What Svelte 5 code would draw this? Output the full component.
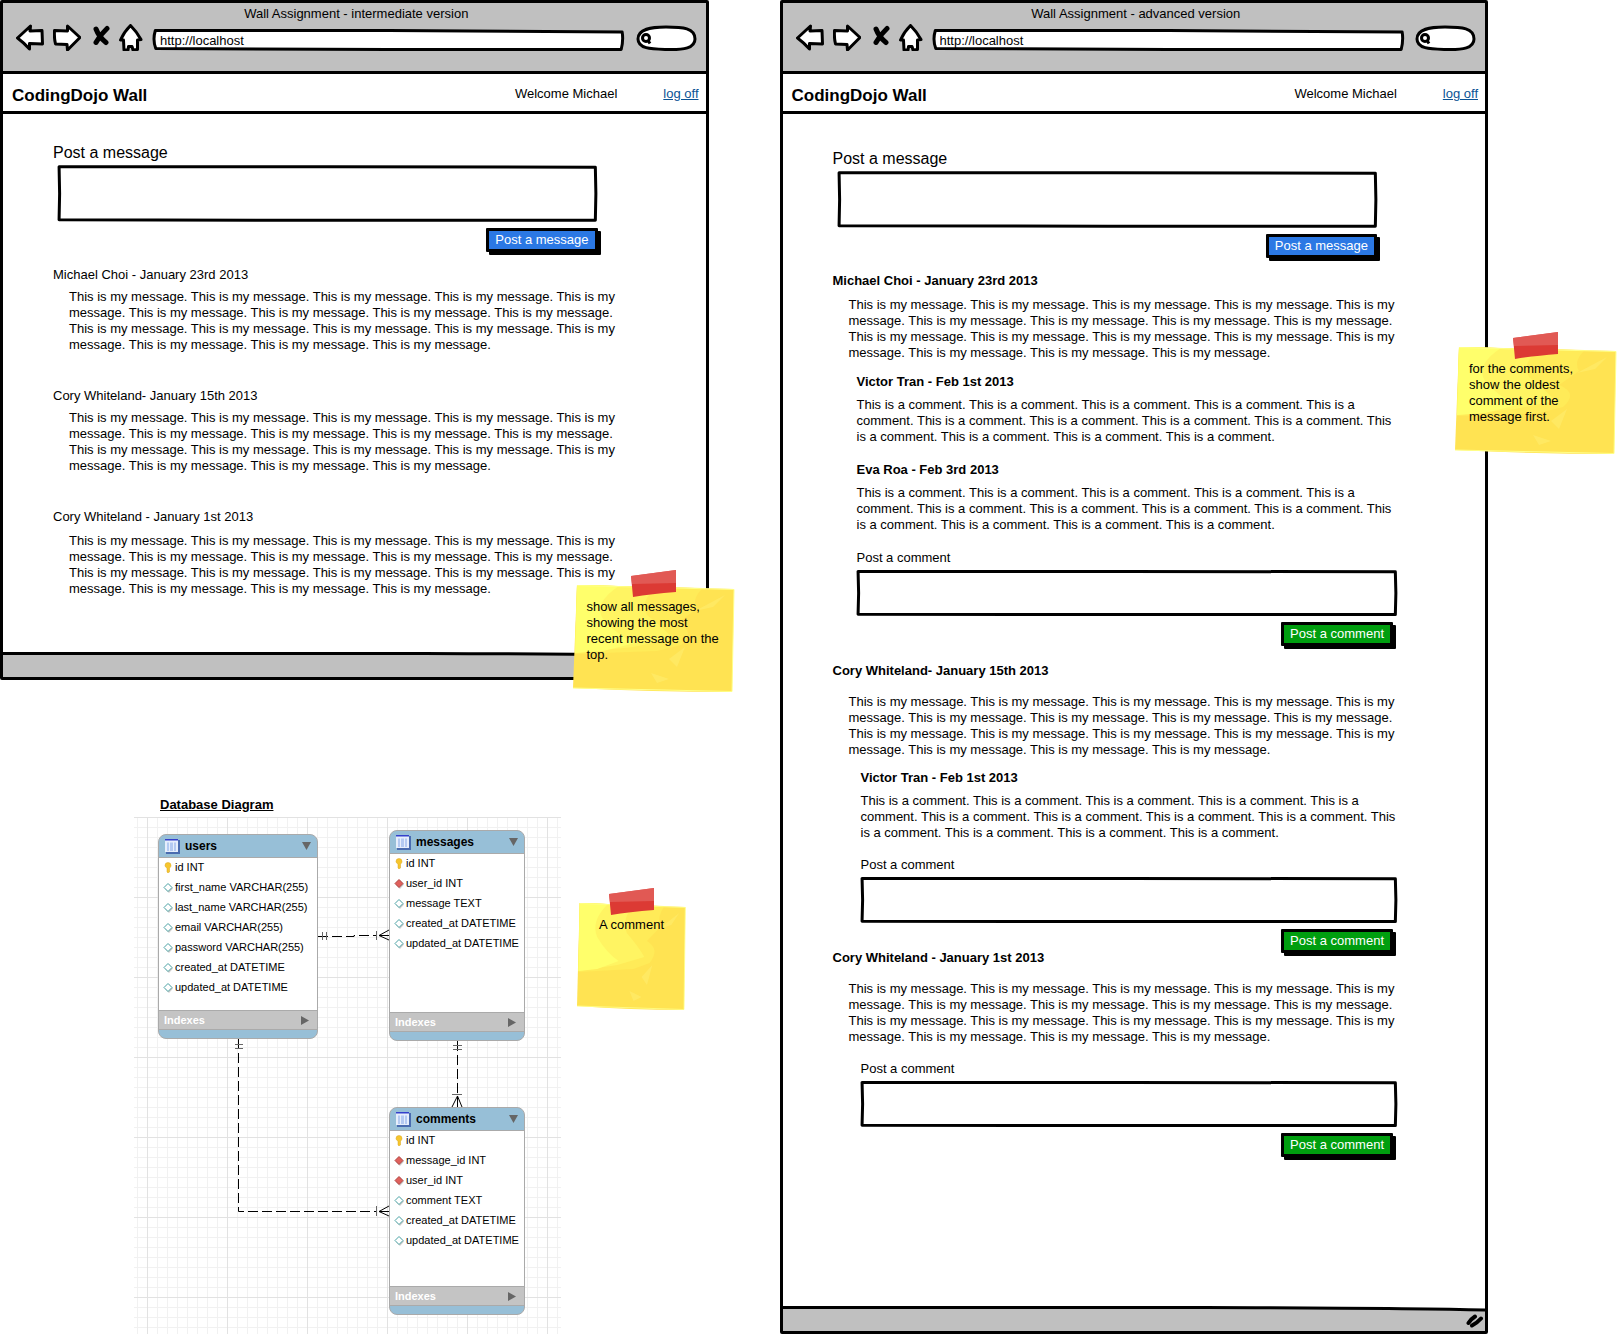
<script lang="ts">
  type Comment = { author: string; date: string };
  type Post = { author: string; sep: string; date: string; loose?: boolean; tight?: boolean; comments: Comment[] };

  const messageText = Array(17).fill('This is my message.').join(' ');
  const commentText = Array(13).fill('This is a comment.').join(' ');

  const intermediate: Post[] = [
    { author: 'Michael Choi', sep: ' - ', date: 'January 23rd 2013', comments: [] },
    { author: 'Cory Whiteland', sep: '- ', date: 'January 15th 2013', comments: [] },
    { author: 'Cory Whiteland', sep: ' - ', date: 'January 1st 2013', loose: true, comments: [] },
  ];

  const advanced: Post[] = [
    {
      author: 'Michael Choi', sep: ' - ', date: 'January 23rd 2013',
      comments: [{ author: 'Victor Tran', date: 'Feb 1st 2013' }, { author: 'Eva Roa', date: 'Feb 3rd 2013' }],
    },
    {
      author: 'Cory Whiteland', sep: '- ', date: 'January 15th 2013', loose: true,
      comments: [{ author: 'Victor Tran', date: 'Feb 1st 2013' }],
    },
    { author: 'Cory Whiteland', sep: ' - ', date: 'January 1st 2013', loose: true, tight: true, comments: [] },
  ];

  // position and size of each entity on the diagram canvas
  const entities = [
    {
      name: 'users', x: 24, y: 17, w: 160, h: 205,
      columns: [
        ['key', 'id INT'],
        ['col', 'first_name VARCHAR(255)'],
        ['col', 'last_name VARCHAR(255)'],
        ['col', 'email VARCHAR(255)'],
        ['col', 'password VARCHAR(255)'],
        ['col', 'created_at DATETIME'],
        ['col', 'updated_at DATETIME'],
      ],
    },
    {
      name: 'messages', x: 255, y: 13, w: 136, h: 211,
      columns: [
        ['key', 'id INT'],
        ['fk', 'user_id INT'],
        ['col', 'message TEXT'],
        ['col', 'created_at DATETIME'],
        ['col', 'updated_at DATETIME'],
      ],
    },
    {
      name: 'comments', x: 255, y: 290, w: 136, h: 208,
      columns: [
        ['key', 'id INT'],
        ['fk', 'message_id INT'],
        ['fk', 'user_id INT'],
        ['col', 'comment TEXT'],
        ['col', 'created_at DATETIME'],
        ['col', 'updated_at DATETIME'],
      ],
    },
  ];
</script>

{#snippet toolbar(title: string)}
  <header class="toolbar">
    <div class="window-title">{title}</div>
    <div class="nav">
      <button class="icon" aria-label="Back">
        <svg width="28" height="27" viewBox="0 0 28 27"><path d="M1.5 14 L14.5 2 L14 7 L26 6.5 L26.5 20 L13.5 19.5 L13.5 25 Q7 18 1.5 14Z" /></svg>
      </button>
      <button class="icon" aria-label="Forward">
        <svg width="28" height="27" viewBox="0 0 28 27"><path d="M1.5 6.5 L14.5 7 L14.5 2 Q21 8 27 13.5 L14.5 26 L14 20.5 L2.5 20 Q1 14 1.5 6.5Z" /></svg>
      </button>
      <button class="icon" aria-label="Stop">
        <svg width="20" height="27" viewBox="0 0 20 27"><path class="cross" d="M6 5 Q9 13 16 18.5 M17 4.5 Q10 11 6 18.5" /></svg>
      </button>
      <button class="icon" aria-label="Home">
        <svg width="24" height="27" viewBox="0 0 24 27"><path d="M11.5 1.5 Q5 8 1.5 16 L4.5 16 L5 26 L9 26 L9.5 22.5 L13 22.5 L14 26 L18.5 25.5 L18.5 16 L22 15.5 Q18 8 11.5 1.5Z" /></svg>
      </button>
      <div class="sketch address">
        <svg viewBox="0 0 100 22" preserveAspectRatio="none" aria-hidden="true"><path d="M.7 1.5 L50 1.5 L99.5 3 Q99.8 11 99.3 20.5 L50 20.5 L.8 19.5 Q.1 11 .7 1.5Z" /></svg>
        <input type="text" value="http://localhost" aria-label="Address" />
      </div>
      <div class="sketch search">
        <svg viewBox="0 0 60 26" aria-hidden="true">
          <path d="M29 2 C14 2 1 4 1 14 C1 24 15 24 30 24.5 C47 25 58 23 58 14 C58 3 46 2 29 2Z" />
          <circle cx="9" cy="13" r="3.5" /><path d="M11 15.5 L13 18.5" />
        </svg>
        <input type="search" aria-label="Search" />
      </div>
    </div>
  </header>
  <div class="app-bar">
    <h1>CodingDojo Wall</h1>
    <span class="welcome">Welcome Michael</span>
    <a href="#logoff">log off</a>
  </div>
{/snippet}

{#snippet form(id: string, kind: string)}
  <form class="post-form {kind}" on:submit|preventDefault>
    <label for={id}>Post a {kind}</label>
    <div class="sketch field">
      <svg viewBox="0 0 100 100" preserveAspectRatio="none" aria-hidden="true"><path d="M.2 3 L50 3 L99.6 4 L99.7 50 L99.6 97 L50 97 L.2 96 L.3 50Z" /></svg>
      <textarea {id}></textarea>
    </div>
    <button type="submit">Post a {kind}</button>
  </form>
{/snippet}

{#snippet wall(posts: Post[], prefix: string, threaded: boolean)}
  {#each posts as post, i}
    <article class="post" class:loose={post.loose} class:tight={post.tight}>
      <h2>{post.author}{post.sep}{post.date}</h2>
      <p class="message-text">{messageText}</p>
      {#if threaded}
        <div class="thread">
          {#each post.comments as comment}
            <div class="reply">
              <h3>{comment.author} - {comment.date}</h3>
              <p>{commentText}</p>
            </div>
          {/each}
          {@render form(`${prefix}-comment-${i}`, 'comment')}
        </div>
      {/if}
    </article>
  {/each}
{/snippet}

{#snippet statusBar(grip: boolean)}
  <footer class="status">
    <svg class="edge" viewBox="0 0 100 6" preserveAspectRatio="none" aria-hidden="true"><path class="gap" d="M0 0 H100 V4 Q90 2 60 1.5 H0Z" /><path d="M0 1.5 H60 Q90 2 100 4" /></svg>
    {#if grip}
      <svg class="grip" width="18" height="14" viewBox="0 0 18 14" aria-hidden="true"><path d="M2.5 9 Q5 5 9 2.5 M6 11.5 Q11 9 15 4.5" /></svg>
    {/if}
  </footer>
{/snippet}

{#snippet note(text: string)}
  <svg class="paper" viewBox="0 0 162 108" preserveAspectRatio="none" aria-hidden="true">
    <path fill="#ffe352" d="M4 0 L161 4 L159 107 Q80 107 0 103 Z" />
    <path fill="#ffeb58" d="M4 0 L130 3 Q118 14 124 24 L104 38 Q124 46 108 60 L84 66 L2 69 Z" />
    <path fill="#fff462" d="M4 0 L86 2 Q66 14 74 30 Q92 44 100 54 L60 62 L2 68 Z" />
    <path fill="#ffff6b" d="M4 0 L46 1 Q20 18 30 34 Q44 50 62 58 L30 66 L2 68Z" />
    <path fill="#ffec6e" opacity=".6" d="M96 74 L112 62 L104 82Z M122 26 L152 10 L140 22Z M78 88 L96 94 L84 98Z" />
    <path fill="none" stroke="#ffff8a" d="M4 .5 L161 4.5 L159 106.5 L0 103" />
  </svg>
  <svg class="tape" width="46" height="27" viewBox="0 0 46 27" aria-hidden="true">
    <path fill="#dc3a34" d="M0 6 L45 0 L45 22 Q20 24 2 27Z" />
    <path fill="#e2625c" opacity=".8" d="M0 6 L45 0 L45 13 L1 14Z" />
  </svg>
  <p>{text}</p>
{/snippet}

<div class="page">
  <div class="column">
    <section class="window">
      {@render toolbar('Wall Assignment - intermediate version')}
      <main class="content">
        {@render form('basic-message', 'message')}
        {@render wall(intermediate, 'basic', false)}
      </main>
      {@render statusBar(false)}
      <aside class="note on-bottom">{@render note('show all messages, showing the most recent message on the top.')}</aside>
    </section>

    <section class="database">
      <h2>Database Diagram</h2>
      <div class="diagram-row">
        <div class="canvas">
          <svg class="links" viewBox="0 0 427 517" aria-hidden="true">
            <g class="line">
              <path d="M184 119.5 H220 V118.5 H243" />
              <path d="M104.5 222 V394.5 H243" />
              <path d="M323.5 224 V277" />
            </g>
            <g class="tick">
              <path d="M188.5 115 V123 M192.5 115 V123 M242.5 114 V123" />
              <path d="M101 227.5 H109 M101 231.5 H109 M242.5 389 V399" />
              <path d="M319 228.5 H328 M319 232.5 H328 M318 277.5 H328" />
            </g>
            <g class="foot">
              <path d="M255 113 L245 118.5 L255 123 M245 118.5 H255" />
              <path d="M255 389 L245 394.5 L255 399 M245 394.5 H255" />
              <path d="M318 290 L323.5 279 L328 290 M323.5 279 V290" />
            </g>
          </svg>
          {#each entities as e}
            <div class="entity" style="left: {e.x}px; top: {e.y}px; width: {e.w}px; height: {e.h}px">
              <div class="entity-head">
                <svg width="15" height="15" viewBox="0 0 15 15" aria-hidden="true">
                  <path fill="#4a6cb0" d="M1 1 H15 V15 H1Z" /><path fill="#e6eefc" d="M0 0 H13 V13 H0Z" />
                  <path fill="#3340cc" d="M0 0 H13 V1.5 H0Z" /><path fill="#b4caf2" d="M2 3.5 H4 V12 H2Z M5 3.5 H8 V12 H5Z M9 3.5 H11 V12 H9Z" />
                </svg>
                <h3>{e.name}</h3>
                <button class="toggle" aria-label="Collapse {e.name}"><svg width="9" height="8" viewBox="0 0 9 8"><path d="M0 0 H9 L4.5 8Z" /></svg></button>
              </div>
              <ul>
                {#each e.columns as [kind, text]}
                  <li>
                    <svg width="10" height="11" viewBox="0 0 10 11" aria-hidden="true">
                      {#if kind === 'key'}
                        <path fill="#f6c62e" stroke="#d9a521" stroke-width=".5" d="M5 .5 Q8 .5 8 3.5 Q8 5 6.5 6 V10 L5 11 L4 10 V6 Q2 5 2 3.5 Q2 .5 5 .5Z" />
                      {:else}
                        <path fill="#ccc" d="M6 2 L10 6.5 L6 11 L2 7Z" />
                        <path class={kind} d="M5 1.5 L9 5.5 L5 9.5 L1 5.5Z" />
                      {/if}
                    </svg>
                    {text}
                  </li>
                {/each}
              </ul>
              <div class="indexes">
                <span>Indexes</span>
                <button class="toggle" aria-label="Show {e.name} indexes"><svg width="8" height="9" viewBox="0 0 8 9"><path d="M0 0 L8 4.5 L0 9Z" /></svg></button>
              </div>
            </div>
          {/each}
        </div>
        <aside class="note small">{@render note('A comment')}</aside>
      </div>
    </section>
  </div>

  <section class="window tall">
    {@render toolbar('Wall Assignment - advanced version')}
    <main class="content">
      {@render form('advanced-message', 'message')}
      {@render wall(advanced, 'advanced', true)}
    </main>
    {@render statusBar(true)}
    <aside class="note on-side">{@render note('for the comments, show the oldest comment of the message first.')}</aside>
  </section>
</div>

<style>
:global(body) { margin: 0; background: #fff }

.page {
  display: grid;
  grid-template-columns: 1fr 1fr;
  gap: 71px;
  padding: 0 129px 0 0;
  font: 13px/16px "Liberation Sans", Arial, sans-serif;
  color: #000;
}
.column { min-width: 0 }
h1, h2, h3, p, ul { margin: 0; padding: 0 }
h2, h3 { font-size: 13px; line-height: 16px }
button, input, textarea { font: inherit; color: inherit }

.window {
  position: relative;
  display: flex;
  flex-direction: column;
  box-sizing: border-box;
  min-width: 0;
  border: 3px solid #000;
  border-radius: 2px;
}
.toolbar {
  background: #c0c0c0;
  border-bottom: 3px solid #000;
  padding: 3px 9px 20px 13px;
}
.window-title { text-align: center }
.nav {
  display: flex;
  align-items: center;
  gap: 9px;
  padding-top: 2px;
}
.icon { display: flex; padding: 0; border: 0; background: none }
.icon path {
  fill: #fff;
  stroke: #000;
  stroke-width: 3;
  stroke-linejoin: round;
}
.icon .cross { fill: none; stroke-width: 5; stroke-linecap: round }

/* hand drawn outline sits behind the control in the same cell */
.sketch { display: grid; grid-template: 100% / 100% }
.sketch > * { grid-area: 1 / 1; width: 100%; height: 100%; min-width: 0; box-sizing: border-box }
.sketch svg { display: block; overflow: visible }
.sketch path, .sketch circle {
  fill: #fff;
  stroke: #000;
  stroke-width: 3;
  stroke-linejoin: round;
  vector-effect: non-scaling-stroke;
}
.sketch input, .sketch textarea {
  z-index: 1;
  border: 0;
  margin: 0;
  padding: 0 8px;
  background: none;
  resize: none;
  outline: none;
}
.nav .sketch { align-self: flex-end }
.address { flex: 1; height: 22px }
.search { width: 60px; height: 26px; margin-left: 3px }
.search input { padding-left: 18px; appearance: none }

.app-bar {
  display: flex;
  align-items: center;
  height: 34px;
  padding: 3px 7px 0 9px;
  border-bottom: 3px solid #000;
}
h1 { flex: 1; padding-top: 4px; font-size: 17px; line-height: 20px }
.welcome { margin-right: 46px }
.app-bar a { color: #0b5394 }

.content { padding: 29px 88px 55px 50px }
.tall .content { padding-top: 35px; flex: 1 }

.post-form { display: flex; flex-direction: column }
.post-form.message { margin: 0 20px 15px 0 }
.message label { margin-bottom: 2px; font-size: 16px; line-height: 20px }
.field { height: 46px }
.message .field { height: 57px; margin-left: 5px }
.comment label { line-height: 16px; margin-bottom: 4px }
.post-form button {
  align-self: flex-end;
  height: 24px;
  margin-top: 6px;
  padding: 0 6px;
  border: 3px solid #000;
  border-radius: 1px;
  color: #fff;
  line-height: 16px;
  box-shadow: 3px 3px 0 #000;
}
.message button { background: #2b78e4 }
.comment button { background: #009e0f; margin-right: 4px }

.post + .post { margin-top: 35px }
.post h2 { font-weight: normal }
.message-text { padding: 6px 0 0 16px }
.loose .message-text { padding-top: 8px }

.tall .post + .post { margin-top: 17px }
.tall .post + .tight { margin-top: -3px }
.tall .post h2 { font-weight: bold }
.tall .post .message-text { padding-top: 8px }
.tall .loose .message-text { padding-top: 15px }
.thread {
  display: flex;
  flex-direction: column;
  gap: 17px;
  padding: 13px 0 0 24px;
}
.loose .thread { gap: 16px; padding: 12px 0 0 28px }
.tight .thread { padding-top: 16px }
.reply h3 { margin-bottom: 7px }

.status {
  position: relative;
  display: flex;
  flex-direction: column;
  height: 25px;
  background: #c0c0c0;
}
.edge { display: block; width: 100%; height: 6px }
.edge path { fill: none; stroke: #000; stroke-width: 3; vector-effect: non-scaling-stroke }
.edge .gap { fill: #fff; stroke: none }
.grip { align-self: flex-end; margin: 2px 1px 0 0 }
.grip path { fill: none; stroke: #000; stroke-width: 4; stroke-linecap: round }

.note {
  position: relative;
  display: grid;
  box-sizing: border-box;
  width: 162px;
  height: 123px;
  padding-top: 15px;
}
.note > p { grid-area: 1 / 1; padding: 14px 12px 0 14px; z-index: 1 }
.paper { grid-area: 1 / 1; width: 100%; height: 100%; display: block }
.tape { position: absolute; top: 0; left: 50%; transform: translateX(-50%); z-index: 2 }
.on-bottom { position: absolute; right: -29px; bottom: -16px }
.on-side { position: absolute; right: -132px; top: 329px }

.database { padding: 117px 0 0 134px }
.database > h2 {
  padding: 0 0 4px 26px;
  text-decoration: underline;
}
.diagram-row { display: flex; gap: 16px }
.note.small { flex: none; width: 109px; margin-top: 71px; text-align: center }
.note.small p { padding: 14px 14px 0 }
.canvas {
  position: relative;
  flex: none;
  width: 427px;
  height: 517px;
  background-image:
    linear-gradient(#e2e2e2 1px, transparent 1px),
    linear-gradient(90deg, #e2e2e2 1px, transparent 1px),
    linear-gradient(#f1f1f1 1px, transparent 1px),
    linear-gradient(90deg, #f1f1f1 1px, transparent 1px);
  background-size: 80px 80px, 80px 80px, 10px 10px, 10px 10px;
  background-position: 13px 0, 13px 0, 3px 0, 3px 0;
}
.links { display: block; width: 427px; height: 517px }
.links path { fill: none; stroke: #000 }
.links .line path { stroke-dasharray: 10 4 }
.links .tick path { stroke: #666 }
.entity {
  position: absolute;
  display: flex;
  flex-direction: column;
  box-sizing: border-box;
  border: 1px solid #aaa;
  border-radius: 8px;
  padding-bottom: 8px;
  background: #97bfd7;
  font-size: 11px;
}
.entity-head {
  display: flex;
  align-items: center;
  height: 22px;
  padding: 0 6px;
  border-bottom: 1px solid #aaa;
}
.entity-head h3 { flex: 1; margin-left: 5px; font-size: 12px }
.entity ul {
  flex: 1;
  background: #fff;
  list-style: none;
}
.entity li {
  display: flex;
  align-items: center;
  gap: 2px;
  height: 18px;
  padding: 0 0 2px 4px;
  white-space: nowrap;
}
.fk { fill: #e0605c; stroke: #b04542 }
.col { fill: #fff; stroke: #4ba3a5 }
.indexes {
  display: flex;
  justify-content: space-between;
  align-items: center;
  height: 18px;
  padding: 0 8px 0 5px;
  border: solid #aaa;
  border-width: 1px 0;
  background: #c4c4c4;
  color: #fff;
  font-weight: bold;
}
.toggle { display: flex; padding: 0; border: 0; background: none }
.toggle path { fill: #666 }
</style>
